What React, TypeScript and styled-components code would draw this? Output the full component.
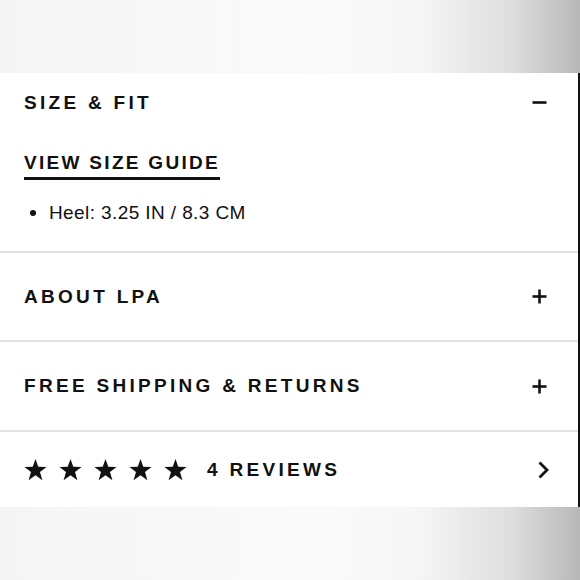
import React from 'react';
import styled, { createGlobalStyle } from 'styled-components';

const GlobalStyle = createGlobalStyle`
  html, body {
    margin: 0;
    padding: 0;
    background: #f8f8f8;
  }
  * {
    box-sizing: border-box;
  }
`;

const Page = styled.div`
  width: 580px;
  height: 580px;
  display: flex;
  flex-direction: column;
  font-family: "Liberation Sans", Arial, sans-serif;
  color: #111;
  overflow: hidden;
`;

const Band = styled.div`
  height: 73px;
  flex-shrink: 0;
  background: linear-gradient(90deg, #f5f5f5 0%, #fafafa 55%, #f6f6f6 72%, #dedede 88%, #b8b8b8 100%);
`;

const Panel = styled.div`
  flex: 1;
  background: #fff;
  border-right: 2px solid #111;
  display: flex;
  flex-direction: column;
`;

const Section = styled.section<{ $last?: boolean }>`
  border-bottom: ${p => (p.$last ? 'none' : '2px solid #e1e1e1')};
`;

const Header = styled.div<{ $h: number }>`
  height: ${p => p.$h}px;
  display: flex;
  align-items: center;
  justify-content: space-between;
  padding: 0 31px 0 24px;
`;

const Title = styled.h3`
  margin: 0;
  font-size: 19px;
  font-weight: 700;
  letter-spacing: 3.3px;
  text-transform: uppercase;
`;

const Body = styled.div`
  padding: 20px 24px 27px;
  display: flex;
  flex-direction: column;
  gap: 22px;
`;

const GuideLink = styled.a`
  align-self: flex-start;
  font-size: 19px;
  font-weight: 700;
  letter-spacing: 2.3px;
  color: #111;
  text-decoration: none;
  border-bottom: 3px solid #111;
  padding-bottom: 3px;
  line-height: 22px;
`;

const Specs = styled.ul`
  margin: 0;
  padding: 0 0 0 6px;
  list-style: none;
`;

const Spec = styled.li`
  display: flex;
  align-items: center;
  gap: 13px;
  font-size: 19px;
  letter-spacing: 0.4px;
  line-height: 22px;
  &::before {
    content: '';
    width: 6px;
    height: 6px;
    border-radius: 50%;
    background: #111;
  }
`;

const Stars = styled.div`
  display: flex;
  align-items: center;
  gap: 12px;
`;

const ReviewRow = styled.div`
  display: flex;
  align-items: center;
  gap: 20px;
`;

const ChevronIcon = styled.svg`
  margin-right: -3px;
`;

const Plus = ({ open }: { open?: boolean }) => (
  <svg width="15" height="15" viewBox="0 0 15 15">
    <line x1="0.5" y1="7.5" x2="14.5" y2="7.5" stroke="#111" strokeWidth="2.6" />
    {!open && <line x1="7.5" y1="0.5" x2="7.5" y2="14.5" stroke="#111" strokeWidth="2.6" />}
  </svg>
);

const Star = () => (
  <svg width="23" height="22" viewBox="0 0 24 23">
    <polygon
      points="12,0 14.9,8.2 23.6,8.4 16.7,13.7 19.2,22.1 12,17.1 4.8,22.1 7.3,13.7 0.4,8.4 9.1,8.2"
      fill="#111"
    />
  </svg>
);

const Chevron = () => (
  <ChevronIcon width="14" height="20" viewBox="0 0 14 20">
    <polyline points="3.5,2.5 11,10 3.5,17.5" fill="none" stroke="#111" strokeWidth="2.8" />
  </ChevronIcon>
);

export default function App() {
  return (
    <>
      <GlobalStyle />
      <Page>
        <Band />
        <Panel>
          <Section>
            <Header $h={59}>
              <Title>Size &amp; Fit</Title>
              <Plus open />
            </Header>
            <Body>
              <GuideLink href="#">VIEW SIZE GUIDE</GuideLink>
              <Specs>
                <Spec>Heel: 3.25 IN / 8.3 CM</Spec>
              </Specs>
            </Body>
          </Section>
          <Section>
            <Header $h={87}>
              <Title>About LPA</Title>
              <Plus />
            </Header>
          </Section>
          <Section>
            <Header $h={88}>
              <Title>Free Shipping &amp; Returns</Title>
              <Plus />
            </Header>
          </Section>
          <Section $last>
            <Header $h={75}>
              <ReviewRow>
                <Stars>
                  {[0, 1, 2, 3, 4].map(i => (
                    <Star key={i} />
                  ))}
                </Stars>
                <Title>4 Reviews</Title>
              </ReviewRow>
              <Chevron />
            </Header>
          </Section>
        </Panel>
        <Band />
      </Page>
    </>
  );
}
